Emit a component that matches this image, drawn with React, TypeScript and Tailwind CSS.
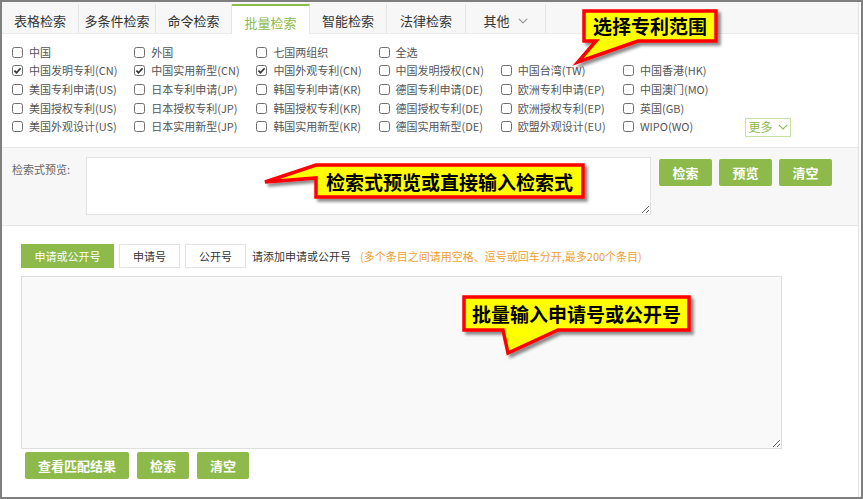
import React from "react";

const GREEN = "bg-[#8dba4a]";

function Box({ checked }: { checked?: boolean }) {
  return (
    <svg width="11" height="11" viewBox="0 0 11 11" className="shrink-0">
      <rect x="0.5" y="0.5" width="10" height="10" rx="2" fill="#ffffff" stroke="#6f6f6f" />
      {checked && <path d="M2.4 5.6 L4.5 7.7 L8.6 3.2" stroke="#333" strokeWidth="1.7" fill="none" />}
    </svg>
  );
}

type Item = { t: string; c?: boolean } | null;

const rows: Item[][] = [
  [{ t: "中国" }, { t: "外国" }, { t: "七国两组织" }, { t: "全选" }, null, null],
  [
    { t: "中国发明专利(CN)", c: true },
    { t: "中国实用新型(CN)", c: true },
    { t: "中国外观专利(CN)", c: true },
    { t: "中国发明授权(CN)" },
    { t: "中国台湾(TW)" },
    { t: "中国香港(HK)" },
  ],
  [
    { t: "美国专利申请(US)" },
    { t: "日本专利申请(JP)" },
    { t: "韩国专利申请(KR)" },
    { t: "德国专利申请(DE)" },
    { t: "欧洲专利申请(EP)" },
    { t: "中国澳门(MO)" },
  ],
  [
    { t: "美国授权专利(US)" },
    { t: "日本授权专利(JP)" },
    { t: "韩国授权专利(KR)" },
    { t: "德国授权专利(DE)" },
    { t: "欧洲授权专利(EP)" },
    { t: "英国(GB)" },
  ],
  [
    { t: "美国外观设计(US)" },
    { t: "日本实用新型(JP)" },
    { t: "韩国实用新型(KR)" },
    { t: "德国实用新型(DE)" },
    { t: "欧盟外观设计(EU)" },
    { t: "WIPO(WO)" },
  ],
];

const tabs = [
  { t: "表格检索", w: "w-[77px]" },
  { t: "多条件检索", w: "w-[77px]" },
  { t: "命令检索", w: "w-[76px]" },
  { t: "批量检索", w: "w-[78px]", active: true },
  { t: "智能检索", w: "w-[77px]" },
  { t: "法律检索", w: "w-[79px]" },
  { t: "其他", w: "w-[80px]", more: true },
];

function Chevron({ color }: { color: string }) {
  return (
    <svg width="10" height="6" viewBox="0 0 10 6" className="shrink-0">
      <path d="M0.8 0.8 L5 5 L9.2 0.8" stroke={color} strokeWidth="1.1" fill="none" />
    </svg>
  );
}

export default function App() {
  return (
    <div className="relative w-[863px] h-[499px] overflow-hidden border-2 border-[#7f7f7f] bg-white font-['Noto_Sans_CJK_SC','Microsoft_YaHei',sans-serif] text-[#333]">
      <div className="mr-[2px] h-full border-r border-[#e2e2e2]">
        {/* tab bar */}
        <div className="flex h-[32px] bg-[#f7f7f7] border-b border-[#ebebeb]">
          {tabs.map((tb) => (
            <div
              key={tb.t}
              className={`${tb.w} mt-[2px] flex items-center justify-center gap-[8px] pt-[5px] text-[13px] border-r border-[#e4e4e4] ${
                tb.active ? "bg-white text-[#8dba4a] border-t-2 border-t-[#8dba4a] -mb-px" : "text-[#333]"
              }`}
            >
              <span>{tb.t}</span>
              {tb.more && <Chevron color="#999" />}
            </div>
          ))}
        </div>

        {/* checkbox grid */}
        <div className="h-[113px] pl-[10px] pt-[9px]">
          <div className="grid grid-cols-[repeat(6,122.2px)_auto]">
            {rows.map((r, ri) => (
              <React.Fragment key={ri}>
                {r.map((it, ci) => (
                  <div key={ci} className="h-[18.6px] flex items-center gap-[6px] text-[11px] leading-none text-[#555]">
                    {it && (
                      <>
                        <Box checked={it.c} />
                        <span>{it.t}</span>
                      </>
                    )}
                  </div>
                ))}
                <div className="h-[18.6px] flex items-center">
                  {ri === 4 && (
                    <div className="mt-px h-[19px] w-[46px] border border-[#c9e0a3] flex items-center justify-center gap-[5px] text-[12px] text-[#8dba4a]">
                      <span>更多</span>
                      <Chevron color="#8dba4a" />
                    </div>
                  )}
                </div>
              </React.Fragment>
            ))}
          </div>
        </div>

        {/* preview */}
        <div className="h-[79px] border-y border-[#e8e8e8] bg-[#f7f7f7] flex pl-[10px] pt-[9px]">
          <div className="w-[74px] pt-[7px] text-[11px] leading-none text-[#666]">检索式预览:</div>
          <textarea className="w-[565px] h-[58px] border border-[#e3e3e3] bg-white outline-none" />
          <div className="ml-[8px] mt-[2px] flex gap-[7px] items-start">
            <button className={`w-[53px] h-[27px] rounded-[2px] ${GREEN} text-white text-[13px] font-bold`}>检索</button>
            <button className={`w-[53px] h-[27px] rounded-[2px] ${GREEN} text-white text-[13px] font-bold`}>预览</button>
            <button className={`w-[53px] h-[27px] rounded-[2px] ${GREEN} text-white text-[13px] font-bold`}>清空</button>
          </div>
        </div>

        {/* batch input */}
        <div className="pl-[19px] pt-[18px]">
          <div className="flex items-center h-[24px]">
            <div className={`w-[93px] h-[24px] ${GREEN} text-white text-[11px] flex items-center justify-center`}>申请或公开号</div>
            <div className="ml-[5px] w-[61px] h-[24px] border border-[#e3e3e3] bg-white text-[11px] flex items-center justify-center">申请号</div>
            <div className="ml-[5px] w-[61px] h-[24px] border border-[#e3e3e3] bg-white text-[11px] flex items-center justify-center">公开号</div>
            <span className="ml-[6px] text-[11px] text-[#333]">请添加申请或公开号</span>
            <span className="ml-[9px] text-[11px] text-[#f0a033]">(多个条目之间请用空格、逗号或回车分开,最多200个条目)</span>
          </div>
          <textarea className="mt-[8px] block w-[761px] h-[173px] border border-[#dedede] bg-[#f9f9f9] outline-none" />
          <div className="mt-[3px] ml-[4px] flex gap-[8px]">
            <button className={`w-[104px] h-[27px] rounded-[2px] ${GREEN} text-white text-[13px] font-bold`}>查看匹配结果</button>
            <button className={`w-[52px] h-[27px] rounded-[2px] ${GREEN} text-white text-[13px] font-bold`}>检索</button>
            <button className={`w-[52px] h-[27px] rounded-[2px] ${GREEN} text-white text-[13px] font-bold`}>清空</button>
          </div>
        </div>
      </div>

      {/* callouts overlay */}
      <svg className="absolute left-[-2px] top-[-2px] pointer-events-none" width="863" height="499" viewBox="0 0 863 499">
        <defs>
          <filter id="sh" x="-10%" y="-20%" width="130%" height="160%">
            <feDropShadow dx="3" dy="3" stdDeviation="1.8" floodColor="#000" floodOpacity="0.45" />
          </filter>
        </defs>
        <g fill="#ffff00" stroke="#ff0000" strokeWidth="3.5" strokeLinejoin="miter" filter="url(#sh)">
          <path d="M584,11 H716 V41 H638 L578,62 L596,41 H584 Z" />
          <path d="M316,165 H583 V197 H316 V178 L265,182 Z" />
          <path d="M464,297 H689 V330 H558 L508,353 L503,330 H464 Z" />
        </g>
      </svg>
      <div className="absolute left-[580px] top-[7px] w-[136px] h-[32px] flex items-center justify-center text-[19px] font-bold text-black leading-none pointer-events-none">
        选择专利范围
      </div>
      <div className="absolute left-[312px] top-[161px] w-[271px] h-[36px] flex items-center justify-center text-[19px] font-bold text-black leading-none pointer-events-none">
        检索式预览或直接输入检索式
      </div>
      <div className="absolute left-[460px] top-[293px] w-[229px] h-[37px] flex items-center justify-center text-[19px] font-bold text-black leading-none pointer-events-none">
        批量输入申请号或公开号
      </div>
    </div>
  );
}
